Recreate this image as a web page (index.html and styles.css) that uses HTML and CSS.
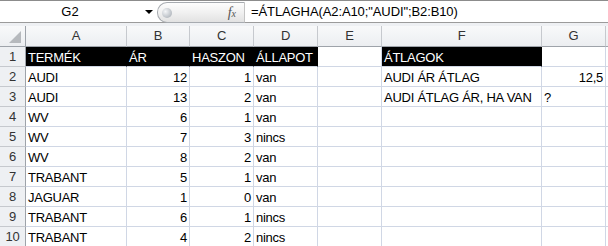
FILE: index.html
```html
<!DOCTYPE html>
<html>
<head>
    <title>ÁTLAGHA</title>
    <link rel="stylesheet" href="styles.css">
</head>
<body>

<div class="formula-bar">
    <div class="name-box">G2</div>
    <div class="name-drop"><span class="arrow"></span></div>
    <div class="fx-pill">
        <span class="knob"></span>
        <span class="fx"><i>f</i><small>x</small></span>
    </div>
    <div class="formula">=ÁTLAGHA(A2:A10;"AUDI";B2:B10)</div>
</div>
<div class="bar-gap"></div>

<div class="sheet">
    <div class="corner"><span class="tri"></span></div>
    <div class="col-head">A</div>
    <div class="col-head">B</div>
    <div class="col-head">C</div>
    <div class="col-head">D</div>
    <div class="col-head">E</div>
    <div class="col-head">F</div>
    <div class="col-head">G</div>
    <div class="col-head"></div>

    <div class="row-head">1</div>
    <div class="cell dark">TERMÉK</div>
    <div class="cell dark">ÁR</div>
    <div class="cell dark">HASZON</div>
    <div class="cell dark">ÁLLAPOT</div>
    <div class="cell"></div>
    <div class="cell dark">ÁTLAGOK</div>
    <div class="cell"></div>
    <div class="cell"></div>

    <div class="row-head">2</div>
    <div class="cell">AUDI</div>
    <div class="cell num">12</div>
    <div class="cell num">1</div>
    <div class="cell">van</div>
    <div class="cell"></div>
    <div class="cell">AUDI ÁR ÁTLAG</div>
    <div class="cell num">12,5</div>
    <div class="cell"></div>

    <div class="row-head">3</div>
    <div class="cell">AUDI</div>
    <div class="cell num">13</div>
    <div class="cell num">2</div>
    <div class="cell">van</div>
    <div class="cell"></div>
    <div class="cell">AUDI ÁTLAG ÁR, HA VAN</div>
    <div class="cell">?</div>
    <div class="cell"></div>

    <div class="row-head">4</div>
    <div class="cell">WV</div>
    <div class="cell num">6</div>
    <div class="cell num">1</div>
    <div class="cell">van</div>
    <div class="cell"></div>
    <div class="cell"></div>
    <div class="cell"></div>
    <div class="cell"></div>

    <div class="row-head">5</div>
    <div class="cell">WV</div>
    <div class="cell num">7</div>
    <div class="cell num">3</div>
    <div class="cell">nincs</div>
    <div class="cell"></div>
    <div class="cell"></div>
    <div class="cell"></div>
    <div class="cell"></div>

    <div class="row-head">6</div>
    <div class="cell">WV</div>
    <div class="cell num">8</div>
    <div class="cell num">2</div>
    <div class="cell">van</div>
    <div class="cell"></div>
    <div class="cell"></div>
    <div class="cell"></div>
    <div class="cell"></div>

    <div class="row-head">7</div>
    <div class="cell">TRABANT</div>
    <div class="cell num">5</div>
    <div class="cell num">1</div>
    <div class="cell">van</div>
    <div class="cell"></div>
    <div class="cell"></div>
    <div class="cell"></div>
    <div class="cell"></div>

    <div class="row-head">8</div>
    <div class="cell">JAGUAR</div>
    <div class="cell num">1</div>
    <div class="cell num">0</div>
    <div class="cell">van</div>
    <div class="cell"></div>
    <div class="cell"></div>
    <div class="cell"></div>
    <div class="cell"></div>

    <div class="row-head">9</div>
    <div class="cell">TRABANT</div>
    <div class="cell num">6</div>
    <div class="cell num">1</div>
    <div class="cell">nincs</div>
    <div class="cell"></div>
    <div class="cell"></div>
    <div class="cell"></div>
    <div class="cell"></div>

    <div class="row-head">10</div>
    <div class="cell">TRABANT</div>
    <div class="cell num">4</div>
    <div class="cell num">2</div>
    <div class="cell">nincs</div>
    <div class="cell"></div>
    <div class="cell"></div>
    <div class="cell"></div>
    <div class="cell"></div>
</div>

</body>
</html>
```

FILE: styles.css
```css
BODY {
    margin: 0;
    width: 608px;
    height: 246px;
    overflow: hidden;
    background: #fff;
    font-family: "Liberation Sans", Arial, sans-serif;
    font-size: 13px;
    color: #000;
}

/* formula bar */
.formula-bar {
    display: flex;
    height: 21px;
    border-top: 1px solid #8c8c8c;
    border-bottom: 1px solid #9b9b9b;
    background: #fff;
}
.name-box {
    width: 140px;
    line-height: 21px;
    text-align: center;
}
.name-drop {
    width: 17px;
    display: flex;
    align-items: center;
}
.name-drop .arrow {
    margin-left: 5px;
    border-left: 4px solid transparent;
    border-right: 4px solid transparent;
    border-top: 4px solid #000;
}
.fx-pill {
    width: 86px;
    margin-top: 1px;
    height: 19px;
    display: flex;
    align-items: center;
    justify-content: space-between;
    border: 1px solid #a7abb0;
    border-right-color: #c4c4c4;
    border-radius: 10px 0 0 10px;
    background: linear-gradient(#fdfdfd, #f1f1f1 50%, #e2e2e2);
}
.knob {
    width: 10px;
    height: 10px;
    margin-left: 4px;
    border-radius: 50%;
    background: radial-gradient(circle at 35% 35%, #f4f6f8, #b9bec4 70%, #9ea4aa);
}
.fx {
    margin-right: 8px;
    font-family: "Liberation Serif", serif;
    font-size: 14px;
    color: #555;
}
.fx small {
    font-style: italic;
    font-size: 10px;
}
.formula {
    padding-left: 6px;
    line-height: 21px;
    letter-spacing: -0.1px;
}
.bar-gap {
    height: 3px;
    background: #eef0f3;
}

/* grid */
.sheet {
    display: grid;
    grid-template-columns: 26px 101px 63px 64px 64px 64px 160px 64px 1fr;
    grid-template-rows: 21px;
    grid-auto-rows: 20px;
}
.corner, .col-head, .row-head {
    box-sizing: border-box;
    background: linear-gradient(#f8f9fa, #eceef1);
    border-right: 1px solid #c6c9ce;
    border-bottom: 1px solid #c6c9ce;
    color: #333;
}
.corner {
    border-right-color: #9ea3aa;
    border-bottom-color: #9ea3aa;
    position: relative;
}
.corner .tri {
    position: absolute;
    right: 4px;
    bottom: 3px;
    border-left: 12px solid transparent;
    border-bottom: 12px solid #b6b9bd;
}
.col-head {
    text-align: center;
    line-height: 20px;
    border-bottom-color: #9ea3aa;
    letter-spacing: -0.2px;
}
.row-head {
    text-align: center;
    line-height: 20px;
    border-right-color: #9ea3aa;
    background: #eef0f3;
    letter-spacing: -0.3px;
}
.cell {
    box-sizing: border-box;
    border-right: 1px solid #d0d7e5;
    border-bottom: 1px solid #d0d7e5;
    padding: 2px 2px 0 2px;
    line-height: 17px;
    white-space: nowrap;
    letter-spacing: -0.25px;
}
.num {
    text-align: right;
}
.dark {
    background: #000;
    color: #fff;
    border-right-color: #000;
}
```
